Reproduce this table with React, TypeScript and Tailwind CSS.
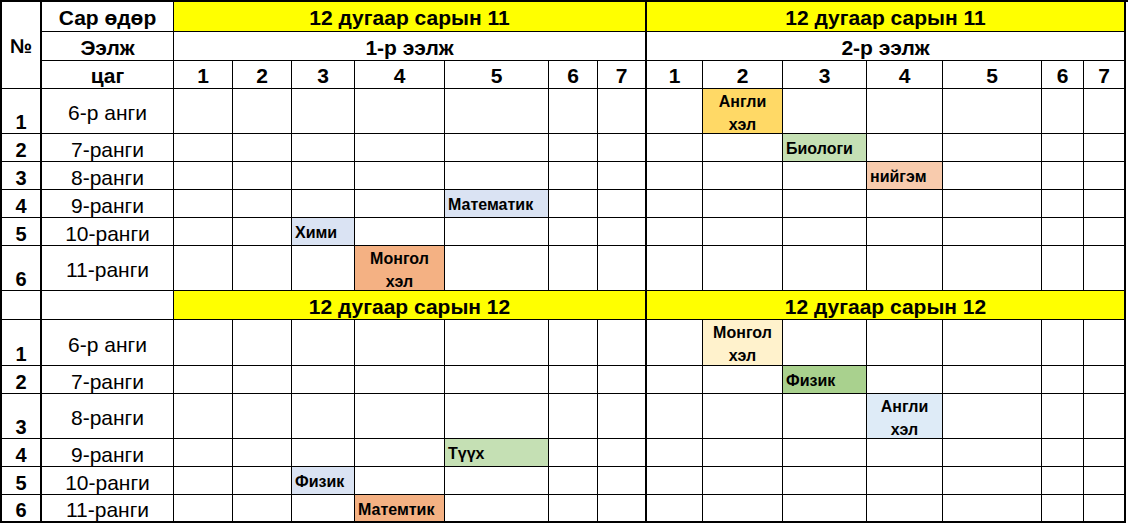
import React from "react";

type Subj = { idx: number; text: string; bg: string; two?: boolean };
type Row = { n: number; label: string; tall: boolean; subj: Subj };

const block1: Row[] = [
  { n: 1, label: "6-р анги", tall: true, subj: { idx: 8, text: "Англи|хэл", bg: "bg-[#ffd966]", two: true } },
  { n: 2, label: "7-ранги", tall: false, subj: { idx: 9, text: "Биологи", bg: "bg-[#c5e0b4]" } },
  { n: 3, label: "8-ранги", tall: false, subj: { idx: 10, text: "нийгэм", bg: "bg-[#f8cbad]" } },
  { n: 4, label: "9-ранги", tall: false, subj: { idx: 4, text: "Математик", bg: "bg-[#dae3f3]" } },
  { n: 5, label: "10-ранги", tall: false, subj: { idx: 2, text: "Хими", bg: "bg-[#dae3f3]" } },
  { n: 6, label: "11-ранги", tall: true, subj: { idx: 3, text: "Монгол|хэл", bg: "bg-[#f4b183]", two: true } },
];

const block2: Row[] = [
  { n: 1, label: "6-р анги", tall: true, subj: { idx: 8, text: "Монгол|хэл", bg: "bg-[#fff2cc]", two: true } },
  { n: 2, label: "7-ранги", tall: false, subj: { idx: 9, text: "Физик", bg: "bg-[#a9d18e]" } },
  { n: 3, label: "8-ранги", tall: true, subj: { idx: 10, text: "Англи|хэл", bg: "bg-[#deebf7]", two: true } },
  { n: 4, label: "9-ранги", tall: false, subj: { idx: 4, text: "Түүх", bg: "bg-[#c5e0b4]" } },
  { n: 5, label: "10-ранги", tall: false, subj: { idx: 2, text: "Физик", bg: "bg-[#dae3f3]" } },
  { n: 6, label: "11-ранги", tall: false, subj: { idx: 3, text: "Матемтик", bg: "bg-[#f4b183]" } },
];

const periods = [1, 2, 3, 4, 5, 6, 7, 1, 2, 3, 4, 5, 6, 7];

function rightBorder(i: number) {
  return i === 6 || i === 13 ? "border-r-2" : "border-r";
}

function DataRow({ row, last }: { row: Row; last: boolean }) {
  const bb = last ? "border-b-2" : "border-b";
  return (
    <>
      <div className={`border-r-2 ${bb} border-black flex items-end justify-center font-bold text-[20px] leading-none`}>
        <span className="pb-[1px]">{row.n}</span>
      </div>
      <div className={`border-r ${bb} border-black flex items-center justify-center pt-[3px] text-[21px] leading-none`}>
        {row.label}
      </div>
      {periods.map((_, i) => {
        const s = row.subj.idx === i ? row.subj : null;
        if (!s) {
          return <div key={i} className={`${rightBorder(i)} ${bb} border-black`} />;
        }
        if (s.two) {
          const [a, b] = s.text.split("|");
          return (
            <div
              key={i}
              className={`${rightBorder(i)} ${bb} border-black ${s.bg} flex flex-col items-center justify-center pt-[3px] font-bold text-[16px] leading-[23px]`}
            >
              <span>{a}</span>
              <span>{b}</span>
            </div>
          );
        }
        return (
          <div
            key={i}
            className={`${rightBorder(i)} ${bb} border-black ${s.bg} flex items-center pl-[3px] pt-[3px] font-bold text-[16px] leading-none`}
          >
            {s.text}
          </div>
        );
      })}
    </>
  );
}

const hdr = "flex items-center justify-center pt-[2px] font-bold text-[21px] leading-none";

export default function App() {
  return (
    <div className="w-[1128px] h-[525px] bg-white font-['Liberation_Sans',Arial,sans-serif] text-black">
      <div className="grid w-[1128px] grid-cols-[40px_132px_59px_59px_63px_90px_104px_49px_49px_56px_80px_84px_76px_99px_42px_42px] grid-rows-[30px_29px_28px_45px_28px_28px_28px_28px_45px_29px_46px_28px_45px_28px_28px_28px] border-l-2 border-t-2 border-black">
        {/* header row 1 */}
        <div className="row-span-3 border-r-2 border-b border-black flex items-center justify-center pt-[2px] font-bold text-[20px]">
          №
        </div>
        <div className={`border-r border-b border-black ${hdr}`}>Сар өдөр</div>
        <div className={`col-span-7 border-r-2 border-b border-black bg-[#ffff00] ${hdr}`}>
          12 дугаар сарын 11
        </div>
        <div className={`col-span-7 border-r-2 border-b border-black bg-[#ffff00] ${hdr}`}>
          12 дугаар сарын 11
        </div>

        {/* header row 2 */}
        <div className={`border-r border-b border-black ${hdr}`}>Ээлж</div>
        <div className={`col-span-7 border-r-2 border-b border-black ${hdr}`}>1-р ээлж</div>
        <div className={`col-span-7 border-r-2 border-b border-black ${hdr}`}>2-р ээлж</div>

        {/* header row 3 */}
        <div className={`border-r border-b border-black ${hdr}`}>цаг</div>
        {periods.map((p, i) => (
          <div key={i} className={`${rightBorder(i)} border-b border-black ${hdr}`}>
            {p}
          </div>
        ))}

        {block1.map((r) => (
          <DataRow key={`a${r.n}`} row={r} last={false} />
        ))}

        {/* date row */}
        <div className="border-r-2 border-b border-black" />
        <div className="border-r border-b border-black" />
        <div className={`col-span-7 border-r-2 border-b border-black bg-[#ffff00] ${hdr}`}>
          12 дугаар сарын 12
        </div>
        <div className={`col-span-7 border-r-2 border-b border-black bg-[#ffff00] ${hdr}`}>
          12 дугаар сарын 12
        </div>

        {block2.map((r, k) => (
          <DataRow key={`b${r.n}`} row={r} last={k === block2.length - 1} />
        ))}
      </div>
    </div>
  );
}
